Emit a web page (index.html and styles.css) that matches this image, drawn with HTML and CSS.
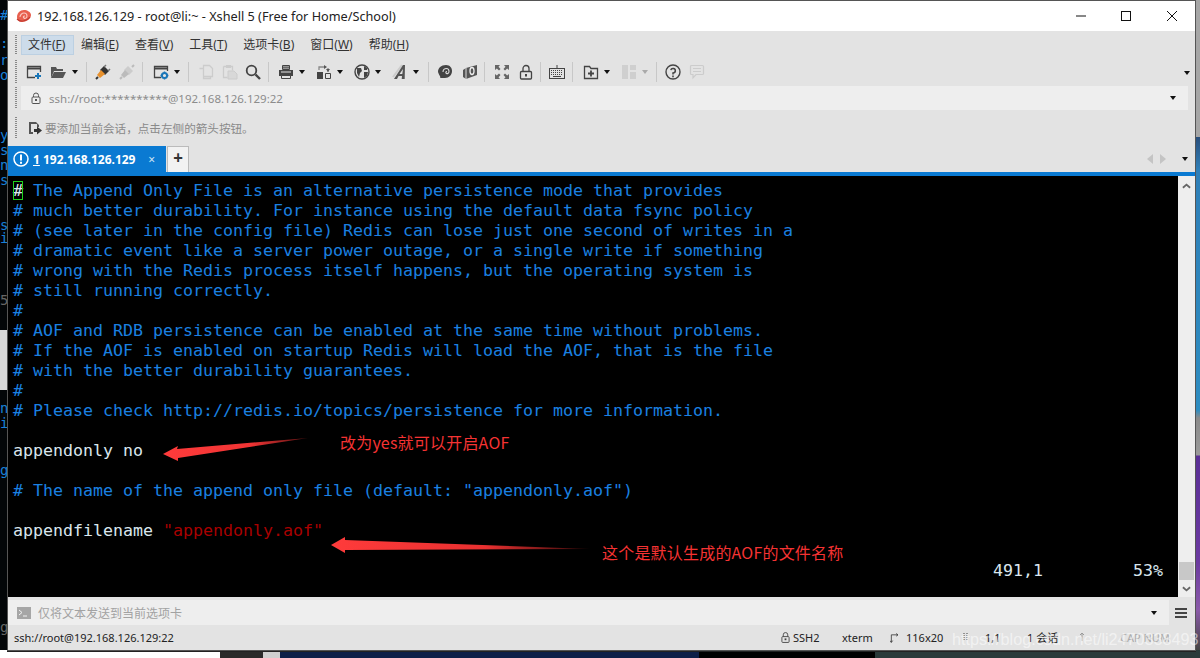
FILE: index.html
```html
<!DOCTYPE html>
<html lang="zh">
<head>
<meta charset="utf-8">
<title>Xshell 5</title>
<link rel="stylesheet" href="styles.css">
</head>
<body>
<div class="desktop">
  <div class="bg-left-top">
    <span class="frag f1">#</span><span class="frag f2">:</span><span class="frag f3">r</span><span class="frag f4">o</span>
    <span class="frag f5">y</span><span class="frag f6">s</span><span class="frag f7">n</span><span class="frag f8">s</span>
    <span class="frag f9">s</span><span class="frag f10">i</span><span class="frag f11 dim">5</span>
    <span class="frag f12">n</span><span class="frag f13">i</span><span class="frag f14">g</span><span class="frag f15 dim">g</span>
  </div>
  <div class="bg-band"></div>
  <div class="bg-right"></div>
  <div class="bg-bottom"><i class="b-white"></i><i class="b-dark"></i><i class="b-gray"></i><i class="b-navy"></i><i class="b-black"></i><i class="b-photo"></i></div>

  <div class="window">
    <header class="titlebar">
      <svg class="logo" viewBox="0 0 16 16"><path d="M1 9c0-4 3-7 7-7 3 0 7 2 7 5 0 4-5 7-9 7-3 0-5-2-5-5z" fill="#e8604f"/><path d="M4 9c0-2 2-4 4-4s3 1 3 3-2 3-3 2-1-2 1-2" fill="none" stroke="#fbc9c0" stroke-width="1.1"/><path d="M1 11c3 3 9 3 13-2" fill="none" stroke="#c23c32" stroke-width="1.2"/></svg>
      <span class="title-text">192.168.126.129 - root@li:~ - Xshell 5 (Free for Home/School)</span>
      <div class="win-controls">
        <svg class="wc wc-min" viewBox="0 0 12 12"><path d="M1 6h10" stroke="#111" stroke-width="1"/></svg>
        <svg class="wc wc-max" viewBox="0 0 12 12"><rect x="1.5" y="1.5" width="9" height="9" fill="none" stroke="#111"/></svg>
        <svg class="wc wc-close" viewBox="0 0 12 12"><path d="M1 1l10 10M11 1L1 11" stroke="#111" stroke-width="1"/></svg>
      </div>
    </header>

    <nav class="menubar">
      <i class="grip"></i>
      <span class="menu-item active">文件(<u>F</u>)</span>
      <span class="menu-item second">编辑(<u>E</u>)</span>
      <span class="menu-item">查看(<u>V</u>)</span>
      <span class="menu-item">工具(<u>T</u>)</span>
      <span class="menu-item">选项卡(<u>B</u>)</span>
      <span class="menu-item">窗口(<u>W</u>)</span>
      <span class="menu-item">帮助(<u>H</u>)</span>
    </nav>

    <div class="toolbar">
      <i class="grip"></i>
      <svg class="ic first" viewBox="0 0 16 16"><path d="M9 13.5H1.5v-11h13V8" fill="none" stroke="#444" stroke-width="1.3"/><path d="M1.5 4.5h13" stroke="#444" stroke-width="2"/><path d="M12 9v6M9 12h6" stroke="#1976b8" stroke-width="2"/></svg>
      <svg class="ic" viewBox="0 0 16 16"><path d="M1 3h5l1 2h6v2H4L1 14z" fill="#555"/><path d="M4 8h12l-3 6H1z" fill="#555"/></svg>
      <i class="caret c1"></i>
      <i class="sep"></i>
      <svg class="ic" viewBox="0 0 16 16"><path d="M9 2l5 5-4 4-5-5z" fill="#333"/><path d="M6 6l4 4-5 4-3-3z" fill="#e8912d"/><path d="M1 15l2-2" stroke="#333" stroke-width="2"/><path d="M11 1l-2 2M15 5l-2 2" stroke="#777" stroke-width="1.5"/></svg>
      <svg class="ic off" viewBox="0 0 16 16"><path d="M9 2l5 5-4 4-5-5z" fill="#ccc"/><path d="M6 6l4 4-5 4-3-3z" fill="#bbb"/><path d="M1 15l2-2M13 3l2-2" stroke="#bbb" stroke-width="2"/></svg>
      <i class="sep n1"></i>
      <svg class="ic p2" viewBox="0 0 16 16"><path d="M8 13.5H1.5v-11h13V7" fill="none" stroke="#444" stroke-width="1.3"/><path d="M1.5 4.5h13" stroke="#444" stroke-width="2"/><circle cx="11.5" cy="11.5" r="2.6" fill="none" stroke="#1976b8" stroke-width="2"/><path d="M11.5 7.5v1.4M11.5 14v1.4M7.5 11.5h1.4M14 11.5h1.4" stroke="#1976b8" stroke-width="1.5"/></svg>
      <i class="caret"></i>
      <i class="sep"></i>
      <svg class="ic p1" viewBox="0 0 16 16"><path d="M5.5 1.5h6l3 3v8h-9z M1.5 4.5h4v10h7v-2" fill="none" stroke="#ccc" stroke-width="1.3"/></svg>
      <svg class="ic" viewBox="0 0 16 16"><path d="M1.5 2.5h9v4M1.5 2.5v11h4" fill="none" stroke="#ccc" stroke-width="1.3"/><path d="M6 7h6l3 3v5H6z" fill="#d8d8d8" stroke="#ccc"/><path d="M4 1h5v3H4z" fill="#ccc"/></svg>
      <svg class="ic n1" viewBox="0 0 16 16"><circle cx="6.5" cy="6.5" r="4.8" fill="none" stroke="#444" stroke-width="1.8"/><path d="M10.5 10.5l4.5 4.5" stroke="#444" stroke-width="2.4"/></svg>
      <i class="sep n1"></i>
      <svg class="ic p1" viewBox="0 0 16 16"><path d="M4.500 1.500h7v4h-7z M4.500 4h7M4.500 3h7" fill="none" stroke="#444"/><path d="M1 6h14v6H1z" fill="#444"/><path d="M3 8h10" stroke="#e3e3e3"/><path d="M3.500 11.500h9v3h-9z" fill="#e3e3e3" stroke="#444"/></svg>
      <i class="caret"></i>
      <svg class="ic p3" viewBox="0 0 16 16"><path d="M1 8h6v7H1z" fill="#444"/><path d="M9.500 9.500h5v5h-5z" fill="none" stroke="#444"/><path d="M3 6V3h6M12 8V4" fill="none" stroke="#888" stroke-width="1.300"/><path d="M8 1l3 2-3 2zM10 5l2 3 2-3z" fill="#555"/></svg>
      <i class="caret"></i>
      <svg class="ic p3" viewBox="0 0 16 16"><circle cx="8" cy="8" r="7" fill="none" stroke="#444" stroke-width="1.400"/><path d="M3 4h4l1 3-2 2-1 4-2-4zM10 2l3 2v2h-3zM10 8h4l-1 4-3 2z" fill="#444"/></svg>
      <i class="caret"></i>
      <svg class="ic p3" viewBox="0 0 16 16"><path d="M1 13L10 1" stroke="#ccc" stroke-width="2"/><path d="M2 15h3l1.500-3h3.500l-.3 3h3L13 1h-2zM7.500 10l3.500-5-.7 5z" fill="#555"/></svg>
      <i class="caret"></i>
      <i class="sep p1"></i>
      <svg class="ic" viewBox="0 0 16 16"><path d="M1 8c0-4 3-7 8-7 4 0 6 3 6 6 0 4-3 7-7 7H3c1-1 0-1-2-6z" fill="#444"/><path d="M6 8c0-2 1.500-3.500 3.500-3.500S12 6 12 7.500 10.500 10 9.500 9.500 8.500 7.500 10 7.500" fill="none" stroke="#ddd" stroke-width="1.100"/></svg>
      <svg class="ic p1" viewBox="0 0 16 16"><path d="M1 6l3-2 11-3v10l-11 4-3-2z" fill="#555"/><ellipse cx="10" cy="7" rx="2" ry="3.500" fill="none" stroke="#eee" stroke-width="1.300"/><path d="M4 4v11" stroke="#ddd"/></svg>
      <i class="sep n2"></i>
      <svg class="ic p1" viewBox="0 0 16 16"><path d="M1 1h5L4.500 2.800 6.500 5 5 6.500 2.800 4.500 1 6zM15 1v5l-1.800-1.500L11 6.500 9.500 5l2-2.200L10 1zM1 15v-5l1.800 1.500L5 9.500 6.500 11l-2 2.200L6 15zM15 15h-5l1.500-1.800L9.500 11l1.500-1.500 2.200 2L15 10z" fill="#666"/></svg>
      <svg class="ic" viewBox="0 0 16 16"><rect x="2.500" y="7.500" width="11" height="7.500" rx="1" fill="none" stroke="#444" stroke-width="1.300"/><path d="M5 7.500V4.500a3 3 0 0 1 6 0v3" fill="none" stroke="#444" stroke-width="1.300"/><rect x="7" y="10" width="2" height="2.500" fill="#444"/></svg>
      <i class="sep n2"></i>
      <svg class="ic" viewBox="0 0 16 16"><rect x="0.500" y="4.500" width="15" height="10" fill="none" stroke="#444"/><path d="M2 6.500h12M2 8.500h12M2 10.500h12" stroke="#444" stroke-dasharray="1 1"/><path d="M4 12.500h8" stroke="#444"/><path d="M8 4.500V1" stroke="#444"/></svg>
      <i class="sep n1"></i>
      <svg class="ic p2" viewBox="0 0 16 16"><path d="M1.500 2.500h5l1.500 2h6.500v10h-13z" fill="none" stroke="#444" stroke-width="1.300"/><path d="M8 6.500v6M5 9.500h6" stroke="#444" stroke-width="1.800"/></svg>
      <i class="caret"></i>
      <svg class="ic p3" viewBox="0 0 16 16"><path d="M1 1h6v14H1zM9 1h6v5H9zM9 8h6v7H9z" fill="#cfcfcf"/></svg>
      <i class="caret off"></i>
      <i class="sep"></i>
      <svg class="ic" viewBox="0 0 16 16"><circle cx="8" cy="8" r="7" fill="none" stroke="#444" stroke-width="1.400"/><path d="M5.800 6.200A2.300 2.300 0 1 1 8 9v1.400" fill="none" stroke="#444" stroke-width="1.500"/><path d="M7.200 11.600h1.600v1.600H7.200z" fill="#444"/></svg>
      <svg class="ic" viewBox="0 0 16 16"><path d="M2.500 1.500h11a1 1 0 0 1 1 1v7a1 1 0 0 1-1 1H7l-3 3.500v-3.500H2.500a1 1 0 0 1-1-1v-7a1 1 0 0 1 1-1z" fill="none" stroke="#ccc" stroke-width="1.200"/><path d="M4 4.500h8M4 7.500h8" stroke="#ccc"/></svg>
      <i class="caret end"></i>
    </div>

    <div class="addressrow">
      <i class="grip"></i>
      <div class="address">
        <svg class="lock-sm" viewBox="0 0 12 12"><rect x="2" y="5" width="8" height="6.500" rx="1" fill="none" stroke="#555"/><path d="M3.500 5V3.500a2.500 2.500 0 0 1 5 0V5" fill="none" stroke="#555"/><rect x="5" y="7" width="2" height="2" fill="#555"/></svg>
        <span class="addr-text">ssh://root:**********@192.168.126.129:22</span>
        <i class="caret end"></i>
      </div>
    </div>

    <div class="hintrow">
      <i class="grip"></i>
      <svg class="hint-ic" viewBox="0 0 14 14"><path d="M1 13V1h7l3 3v2H9V3H3v8h2v2z" fill="#555"/><path d="M6 8h3V5.500L14 9.500l-5 4V11H6z" fill="#333"/></svg>
      <span class="hint-text">要添加当前会话&#xFF0C;点击左侧的箭头按钮。</span>
    </div>

    <div class="tabsrow">
      <div class="tab">
        <svg class="tab-ic" viewBox="0 0 16 16"><circle cx="8" cy="8" r="7" fill="none" stroke="#fff" stroke-width="1.500"/><path d="M8 3.500v6" stroke="#fff" stroke-width="2"/><path d="M7 10.800h2v2H7z" fill="#fff"/></svg>
        <span class="tab-text"><u>1</u> 192.168.126.129</span>
        <span class="tab-close">×</span>
      </div>
      <div class="tab-add">+</div>
      <div class="tab-nav">
        <i class="tri-left"></i><i class="tri-right"></i><i class="caret"></i>
      </div>
    </div>
    <div class="blueline"></div>

    <main class="termwrap">
      <pre class="terminal"><span class="cm"><span class="cursor">#</span> The Append Only File is an alternative persistence mode that provides
# much better durability. For instance using the default data fsync policy
# (see later in the config file) Redis can lose just one second of writes in a
# dramatic event like a server power outage, or a single write if something
# wrong with the Redis process itself happens, but the operating system is
# still running correctly.
#
# AOF and RDB persistence can be enabled at the same time without problems.
# If the AOF is enabled on startup Redis will load the AOF, that is the file
# with the better durability guarantees.
#
# Please check http://redis.io/topics/persistence for more information.</span>

appendonly no

<span class="cm"># The name of the append only file (default: "appendonly.aof")</span>

appendfilename <span class="str">"appendonly.aof"</span>

                                                                                                  491,1         53%</pre>
      <div class="scrollbar">
        <svg class="chev" viewBox="0 0 10 6"><path d="M1 5l4-3.500L9 5" fill="none" stroke="#666" stroke-width="2"/></svg>
        <div class="spacer"></div>
        <div class="thumb"></div>
        <svg class="chev" viewBox="0 0 10 6"><path d="M1 1l4 3.500L9 1" fill="none" stroke="#666" stroke-width="2"/></svg>
      </div>
    </main>

    <div class="inputrow">
      <div class="inputbox">
        <svg class="prompt" viewBox="0 0 14 12"><rect width="14" height="12" fill="#a6a6a6"/><path d="M2 3l3 2.500L2 8M6 9h4" fill="none" stroke="#f2f2f2"/></svg>
        <span class="input-text">仅将文本发送到当前选项卡</span>
        <i class="caret end"></i>
      </div>
      <div class="burger"><i></i><i></i><i></i></div>
    </div>

    <footer class="statusbar">
      <span class="st-conn">ssh://root@192.168.126.129:22</span>
      <span class="si si-ssh"><svg class="st-lock" viewBox="0 0 10 12"><rect x="1" y="5" width="8" height="6.500" rx="1" fill="none" stroke="#444"/><path d="M2.500 5V3a2.500 2.500 0 0 1 5 0v2" fill="none" stroke="#444"/><rect x="4" y="7" width="2" height="2" fill="#444"/></svg>SSH2</span>
      <span class="si si-term">xterm</span>
      <span class="si si-size"><svg class="st-res" viewBox="0 0 9 11"><path d="M1.500 11V2.500H9M0 9l1.500 2L3 9M7 1l2 1.500L7 4" fill="none" stroke="#444"/></svg>116x20</span>
      <span class="si si-car"><svg class="st-bars" viewBox="0 0 6 10"><path d="M1 1v8M4 1v8" stroke="#777" stroke-width="1.500" stroke-dasharray="1 1"/></svg></span>
      <span class="si si-pos">1,1</span>
      <span class="si si-sess">1 会话</span>
      <span class="si si-arrow"><svg class="st-bars" viewBox="0 0 6 10"><path d="M3 1v8M1 3l2-2 2 2" fill="none" stroke="#999"/></svg></span>
      <span class="si si-cap">CAP NUM</span>
    </footer>
    <span class="watermark">https://blog.csdn.net/li2470338493</span>
  </div>

  <svg class="arrows" viewBox="0 0 1200 658">
    <defs>
      <linearGradient id="a1" x1="163" y1="0" x2="310" y2="0" gradientUnits="userSpaceOnUse"><stop offset="0" stop-color="#ff3b3b"/><stop offset=".6" stop-color="#f03434"/><stop offset="1" stop-color="#501010"/></linearGradient>
      <linearGradient id="a2" x1="330" y1="0" x2="590" y2="0" gradientUnits="userSpaceOnUse"><stop offset="0" stop-color="#ff3b3b"/><stop offset=".6" stop-color="#e83030"/><stop offset="1" stop-color="#300808"/></linearGradient>
    </defs>
    <path d="M163 454L178 446L177 449L308 438L178 458L178 461Z" fill="url(#a1)"/>
    <path d="M331 545L345 537L345 540L590 549L345 550L345 553Z" fill="url(#a2)"/>
  </svg>
  <span class="note note1">改为yes就可以开启AOF</span>
  <span class="note note2">这个是默认生成的AOF的文件名称</span>
</div>
</body>
</html>
```
FILE: styles.css
```css
* { box-sizing: border-box; }
html, body { margin: 0; padding: 0; height: 100%; overflow: hidden; background: #000; }
i { display: block; font-style: normal; }
svg { display: block; flex: none; }

.desktop {
  position: relative;
  width: 1200px;
  height: 658px;
  overflow: hidden;
  background: #000;
  font-family: "Noto Sans", "Noto Sans CJK SC", sans-serif;
}

/* what shows behind the window */
.bg-left-top { position: absolute; left: 0; top: 0; width: 8px; height: 650px; background: #030608; overflow: hidden; }
.frag { position: absolute; left: 0; font: 14px/20px "DejaVu Sans Mono", monospace; color: #1880d8; }
.frag.dim { color: #666; }
.f1 { top: 5px; } .f2 { top: 33px; } .f3 { top: 50px; } .f4 { top: 65px; }
.f5 { top: 125px; } .f6 { top: 140px; } .f7 { top: 155px; } .f8 { top: 170px; }
.f9 { top: 215px; } .f10 { top: 228px; } .f11 { top: 290px; }
.f12 { top: 398px; } .f13 { top: 413px; } .f14 { top: 460px; } .f15 { top: 617px; }
.bg-band { position: absolute; left: 0; top: 330px; width: 8px; height: 60px; background: #d8d8d8; }
.bg-right {
  position: absolute; right: 0; top: 0; width: 5px; height: 658px;
  background: linear-gradient(#a6a6a6 0, #a6a6a6 137px, #2a4f7c 137px, #2f7fb8 170px, #2d8cc0 410px, #8a8a8a 418px, #9a9a9a 455px, #5a2f96 456px, #6b3aa0 560px, #8a5aa8 610px, #444 650px, #333 658px);
}
.bg-bottom { position: absolute; left: 0; right: 0; bottom: 0; height: 8px; display: flex; }
.b-white { width: 220px; background: #fff; }
.b-dark { width: 43px; background: #2a2a2a; }
.b-gray { width: 17px; background: #cfcfcf; }
.b-navy { width: 419px; background: #0e1f48; }
.b-black { width: 176px; background: #000; }
.b-photo { flex: 1; background: #2a3a3a; }

/* window */
.window {
  position: absolute;
  left: 7px;
  top: 0;
  width: 1189px;
  height: 651px;
  display: flex;
  flex-direction: column;
  border: 1px solid #555;
  background: #e3e3e3;
  color: #333;
  box-shadow: 0 1px 0 #222;
}

.titlebar { height: 30px; flex: none; background: #fff; display: flex; align-items: center; padding-left: 8px; }
.logo { width: 16px; height: 16px; }
.title-text { margin-left: 5px; font-size: 12.7px; color: #222; }
.win-controls { margin-left: auto; display: flex; align-items: center; padding-right: 17px; }
.wc { width: 12px; height: 12px; }
.wc-max { margin-left: 33px; }
.wc-close { margin-left: 34px; }

.grip {
  width: 2px; flex: none; margin-left: 7px;
  background: repeating-linear-gradient(#888 0 1px, transparent 1px 2px);
}

.menubar { height: 27px; flex: none; display: flex; align-items: center; font-size: 12px; color: #333; }
.menubar .grip { height: 20px; }
.menu-item { margin-left: 16px; line-height: 20px; white-space: nowrap; }
.menu-item u { text-underline-offset: 1px; }
.menu-item.second { margin-left: 7px; }
.menu-item.active {
  margin-left: 4px; width: 53px; height: 20px; padding-left: 6px;
  background: #cddcea; border: 1px solid #bcd0e2; line-height: 18px;
}

.toolbar { height: 28px; flex: none; display: flex; align-items: center; gap: 8px; position: relative; }
.toolbar .grip { height: 24px; margin-right: 1px; }
.ic { width: 16px; height: 16px; }
.p1 { margin-left: 1px; } .p2 { margin-left: 2px; } .p3 { margin-left: 3px; }
.n1 { margin-left: -1px; } .n2 { margin-left: -2px; }
.sep { width: 1px; height: 20px; background: #c8c8c8; flex: none; }
.caret { width: 0; height: 0; flex: none; margin-left: -3px; border: 3px solid transparent; border-top: 4px solid #111; border-bottom: 0; }
.caret.c1 { margin-left: -2px; }
.caret.off { border-top-color: #aaa; }
.caret.end { margin-left: auto; }
.toolbar .caret.end { position: absolute; right: 5px; top: 13px; }

.addressrow { height: 24px; flex: none; display: flex; align-items: stretch; }
.addressrow .grip { height: 22px; align-self: center; }
.address { flex: 1; margin: 0 7px 0 4px; background: #eeeeee; display: flex; align-items: center; padding: 0 12px 0 9px; }
.lock-sm { width: 12px; height: 12px; }
.addr-text { margin-left: 7px; font-size: 11.5px; letter-spacing: .01px; color: #8c8c8c; }

.hintrow { height: 36px; flex: none; display: flex; align-items: center; padding-bottom: 1px; }
.hintrow .grip { height: 22px; }
.hint-ic { width: 14px; height: 14px; margin-left: 11px; }
.hint-text { margin-left: 3px; font-size: 11.6px; color: #8a8a8a; font-family: "Noto Sans CJK SC", sans-serif; }

.tabsrow { height: 26px; flex: none; display: flex; align-items: stretch; }
.tab { width: 158px; background: #0a7ad2; color: #fff; display: flex; align-items: center; padding-left: 5px; }
.tab-ic { width: 16px; height: 16px; }
.tab-text { margin-left: 4px; font-size: 12px; font-weight: 700; white-space: nowrap; }
.tab-close { margin-left: auto; margin-right: 11px; font-size: 12px; color: #cfe4f5; }
.tab-add { width: 22px; margin-left: 1px; background: #f2f2f2; border: 1px solid #bbb; border-bottom: 0; color: #333; font-size: 17px; font-weight: 700; text-align: center; line-height: 22px; }
.tab-nav { margin-left: auto; display: flex; align-items: center; padding-right: 7px; }
.tri-left { width: 0; height: 0; border: 5px solid transparent; border-left: 0; border-right: 6px solid #c4c4c4; }
.tri-right { width: 0; height: 0; margin-left: 7px; border: 5px solid transparent; border-right: 0; border-left: 6px solid #c4c4c4; }
.tab-nav .caret { margin-left: 16px; }
.blueline { height: 4px; flex: none; background: #0a7ad2; }

.termwrap { height: 421px; flex: none; display: flex; background: #000; }
.terminal {
  flex: 1; margin: 0; padding: 5px 0 0 5px; overflow: hidden;
  font: 16.61px/20px "DejaVu Sans Mono", monospace;
  color: #d9e6ee;
  background: #000;
}
.cm { color: #1a80e2; }
.str { color: #a80000; }
.cursor { color: #d9e6ee; outline: 1px solid #1fd31f; outline-offset: -1px; display: inline-block; width: 10px; height: 19px; line-height: 19px; }

.scrollbar { width: 17px; flex: none; background: #eeeeee; display: flex; flex-direction: column; align-items: center; padding: 7px 1px 5px; }
.chev { width: 9px; height: 6px; }
.spacer { flex: 1; }
.thumb { width: 15px; height: 18px; background: #c8c8c8; margin-bottom: 6px; }

.inputrow { height: 28px; flex: none; display: flex; align-items: stretch; }
.inputbox { width: 1161px; margin-top: 3px; background: #eeeeee; display: flex; align-items: center; padding: 0 12px 0 9px; }
.prompt { width: 14px; height: 12px; }
.input-text { margin-left: 7px; font-size: 12px; color: #a2a2a2; font-family: "Noto Sans CJK SC", sans-serif; }
.burger { flex: 1; display: flex; flex-direction: column; align-items: center; justify-content: center; gap: 2px; padding-top: 3px; padding-right: 2px; }
.burger i { width: 12px; height: 2px; background: #444; }

.statusbar { height: 24px; flex: none; display: flex; align-items: center; font-size: 11px; color: #222; }
.st-conn { margin-left: 6px; width: 767px; white-space: nowrap; }
.si { display: flex; align-items: center; white-space: nowrap; flex: none; }
.si-ssh { width: 61px; }
.si-term { width: 48px; }
.si-size { width: 73px; }
.si-car { width: 22px; }
.si-pos { width: 42px; }
.si-sess { width: 48px; }
.si-arrow { width: 45px; padding-left: 4px; }
.si-cap { width: 60px; color: #aaa; }
.st-lock { width: 9px; height: 11px; margin-right: 3px; }
.st-res { width: 8px; height: 11px; margin-right: 8px; }
.st-bars { width: 6px; height: 10px; }

.watermark {
  position: absolute; left: 944px; top: 627px;
  font: 16.2px/22px "Liberation Sans", sans-serif;
  color: rgba(255, 255, 255, .55);
  white-space: nowrap;
}

.arrows { position: absolute; left: 0; top: 0; width: 1200px; height: 658px; pointer-events: none; }
.note { position: absolute; font: 16px/22px "Noto Sans CJK SC", sans-serif; color: #f53333; white-space: nowrap; letter-spacing: .2px; }
.note1 { left: 340px; top: 431px; }
.note2 { left: 602px; top: 541px; }
```
